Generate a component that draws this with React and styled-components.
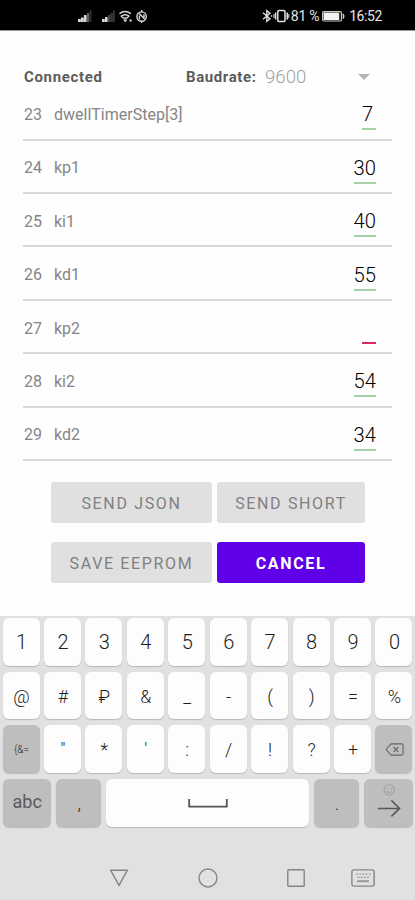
import React, { useState } from 'react'
import styled, { createGlobalStyle } from 'styled-components'

const params = [
  { id: 23, name: 'dwellTimerStep[3]', value: '7' },
  { id: 24, name: 'kp1', value: '30' },
  { id: 25, name: 'ki1', value: '40' },
  { id: 26, name: 'kd1', value: '55' },
  { id: 27, name: 'kp2', value: '' },
  { id: 28, name: 'ki2', value: '54' },
  { id: 29, name: 'kd2', value: '34' },
]

const digitKeys = ['1', '2', '3', '4', '5', '6', '7', '8', '9', '0']
const symbolKeys = ['@', '#', '₽', '&', '_', '-', '(', ')', '=', '%']
const punctKeys = ['"', '*', "'", ':', '/', '!', '?', '+']

function StatusIcons() {
  return (
    <svg width="72" height="16" viewBox="0 0 72 16">
      {/* signal 1 */}
      <g fill="#d8d8d8">
        <rect x="1" y="11" width="2.8" height="3" />
        <rect x="4" y="9.5" width="2.8" height="4.5" />
        <rect x="7" y="7" width="2.6" height="7" />
        <rect x="10" y="5" width="2" height="9" fill="#606060" />
        <rect x="12.4" y="2.5" width="2" height="11.5" fill="#343434" />
      </g>
      {/* signal 2 */}
      <g fill="#d8d8d8">
        <rect x="25" y="11" width="2.8" height="3" />
        <rect x="28" y="9" width="2.6" height="5" />
        <rect x="31" y="7" width="2.4" height="7" fill="#484848" />
        <rect x="33.6" y="5" width="2.2" height="9" fill="#3c3c3c" />
        <rect x="36" y="2.5" width="2" height="11.5" fill="#303030" />
      </g>
      {/* wifi */}
      <g fill="none" stroke="#d8d8d8" strokeWidth="1.5">
        <path d="M42.5 5.6Q48 1.2 53.8 5.6" />
        <path d="M44.4 8.2Q48 5.2 51.8 8.2Q48 12.4 44.4 8.2Z" />
        <path d="M46.8 11.4L48.2 13L49.6 11.4" />
        <path d="M53.6 11.4V13.6" strokeWidth="2" />
      </g>
      {/* shield */}
      <g fill="none" stroke="#d8d8d8" strokeWidth="1.4">
        <circle cx="64.6" cy="8.6" r="4.7" />
        <path d="M62.2 5.4L67 10.2V6.2M62.4 7.5V11.4M64.6 2V4M64.6 13V15" />
      </g>
    </svg>
  )
}

function BluetoothIcon() {
  return (
    <svg width="11" height="14" viewBox="0 0 11 14" fill="none" stroke="#e0e0e0" strokeWidth="1.4">
      <path d="M1 3.7L8 9.8L4.8 12.4V1.6L8 4.2L1 10.3M9.6 6.2V7.8" />
    </svg>
  )
}

function VibrateIcon() {
  return (
    <svg width="17" height="14" viewBox="0 0 17 14" fill="none" stroke="#e0e0e0" strokeWidth="1.5">
      <rect x="4.8" y="1.4" width="7.2" height="11.2" rx="1.2" />
      <path d="M2.6 3.5V10.5M14.2 3.5V10.5" />
      <path d="M1 5V9M15.8 5V9" strokeWidth="1" />
    </svg>
  )
}

function BatteryIcon() {
  return (
    <svg width="23" height="11" viewBox="0 0 23 11">
      <rect x=".6" y=".6" width="18.8" height="9.4" rx="1.2" fill="none" stroke="#c8c8c8" strokeWidth="1.2" />
      <rect x="1.6" y="1.6" width="15.6" height="7.4" fill="#f2f2f2" />
      <path d="M20.8 3Q22.6 5.3 20.8 7.6" fill="none" stroke="#c8c8c8" strokeWidth="1.6" />
    </svg>
  )
}

function BackspaceIcon() {
  return (
    <svg width="19" height="13" viewBox="0 0 19 13" fill="none" stroke="#666" strokeWidth="1.1">
      <path d="M6 .9H16.6Q18.1 .9 18.1 2.4V10.6Q18.1 12.1 16.6 12.1H6L1 6.5Z" strokeLinejoin="round" />
      <path d="M8.6 4.1L13.2 8.9M13.2 4.1L8.6 8.9" strokeWidth="1.3" />
    </svg>
  )
}

function EnterIcon() {
  return (
    <svg width="26" height="38" viewBox="0 0 26 38" fill="none">
      <g stroke="#a2a2a2" strokeWidth="1.1">
        <circle cx="13.2" cy="6" r="5.2" />
        <path d="M10.5 7.2Q13.2 10 15.9 7.2M11.3 4V5.2M15.1 4V5.2" />
      </g>
      <path d="M1.8 24.4H23.2M15.4 16.4L23.6 24.4L15.4 32.4" stroke="#585858" strokeWidth="1.5" />
    </svg>
  )
}

function App() {
  const [list] = useState(params)

  return (
    <>
      <GlobalStyle />
      <Screen>
        <StatusBar>
          <StatusIcons />
          <StatusRight>
            <BluetoothIcon />
            <VibrateIcon />
            <BatteryText>81 %</BatteryText>
            <BatteryIcon />
            <Clock>16:52</Clock>
          </StatusRight>
        </StatusBar>

        <Content>
          <Header>
            <Connection>Connected</Connection>
            <BaudLabel>Baudrate:</BaudLabel>
            <BaudValue>9600</BaudValue>
            <Caret />
          </Header>

          {list.map((item) => (
            <ParamRow key={item.id}>
              <ParamId>{item.id}</ParamId>
              <ParamName>{item.name}</ParamName>
              <ParamValue $empty={!item.value}>{item.value}</ParamValue>
            </ParamRow>
          ))}

          <ButtonGrid>
            <ActionButton>SEND JSON</ActionButton>
            <ActionButton>SEND SHORT</ActionButton>
            <ActionButton>SAVE EEPROM</ActionButton>
            <ActionButton $primary>CANCEL</ActionButton>
          </ButtonGrid>
        </Content>

        <Keyboard>
          <KeyRow>
            {digitKeys.map((k) => <Key key={k} $size={20}>{k}</Key>)}
          </KeyRow>
          <KeyRow>
            {symbolKeys.map((k) => <Key key={k}>{k}</Key>)}
          </KeyRow>
          <KeyRow>
            <Key $dark $size={10}>{'{&='}</Key>
            {punctKeys.map((k) => <Key key={k}>{k}</Key>)}
            <Key $dark><BackspaceIcon /></Key>
          </KeyRow>
          <KeyRow>
            <Key $dark $width={48.5}><KeyLabel>abc</KeyLabel></Key>
            <Key $dark $width={45}>,</Key>
            <Key $width={202.5}>
              <svg width="40" height="12" viewBox="0 0 40 12" fill="none" stroke="#555" strokeWidth="1.8">
                <path d="M1.2 2V9.6H38.8V2" />
              </svg>
            </Key>
            <Key $dark $width={45}>.</Key>
            <Key $dark $width={48.5}><EnterIcon /></Key>
          </KeyRow>
        </Keyboard>

        <NavBar>
          <svg width="20" height="18" viewBox="0 0 20 18" fill="none" stroke="#858585" strokeWidth="1.4">
            <path d="M1.6 1.2H18.4L10 16.4Z" strokeLinejoin="round" />
          </svg>
          <svg width="20" height="20" viewBox="0 0 20 20" fill="none" stroke="#858585" strokeWidth="1.4">
            <circle cx="10" cy="10" r="9" />
          </svg>
          <svg width="18" height="18" viewBox="0 0 18 18" fill="none" stroke="#858585" strokeWidth="1.4">
            <rect x=".8" y=".8" width="16.4" height="16.4" rx=".8" />
          </svg>
          <svg width="24" height="18" viewBox="0 0 24 18" fill="none" stroke="#858585" strokeWidth="1.4">
            <rect x=".9" y=".9" width="22.2" height="16.2" rx="2" />
            <path d="M5 5.2H19.5M6.5 8.4H18" strokeDasharray="2 1.2" strokeWidth="1.2" stroke="#999" />
            <path d="M6 12.2H18" strokeWidth="2" stroke="#999" />
          </svg>
        </NavBar>
      </Screen>
    </>
  )
}

const GlobalStyle = createGlobalStyle`
  * {
    box-sizing: border-box;
  }
  body {
    margin: 0;
    background-color: #fefefe;
    font-family: Roboto, "Noto Sans", sans-serif;
    -webkit-font-smoothing: antialiased;
  }
`

const Screen = styled.div`
  width: 415px;
  height: 900px;
  display: flex;
  flex-direction: column;
  background-color: #fefefe;
  overflow: hidden;
`

const StatusBar = styled.div`
  height: 31px;
  flex-shrink: 0;
  background-color: #000;
  border-bottom: 1px solid #999;
  display: flex;
  justify-content: space-between;
  align-items: center;
  padding: 2px 33px 0 77px;
  color: #e6e6e6;
`

const StatusRight = styled.div`
  display: flex;
  align-items: center;
`

const BatteryText = styled.span`
  font-size: 14px;
  margin: 0 3px 0 1px;
  letter-spacing: -0.3px;
  white-space: nowrap;
`

const Clock = styled.span`
  font-size: 14px;
  margin-left: 4px;
  letter-spacing: -0.4px;
`

const Content = styled.div`
  height: 585px;
  flex-shrink: 0;
  padding: 0 23px;
`

const Header = styled.div`
  height: 56.3px;
  display: flex;
  align-items: center;
  padding: 35px 22px 0 1px;
  font-size: 15px;
`

const Connection = styled.span`
  width: 162px;
  font-weight: 700;
  letter-spacing: 0.65px;
  color: #5c5c5c;
`

const BaudLabel = styled.span`
  width: 79px;
  font-weight: 700;
  letter-spacing: 0.6px;
  color: #5c5c5c;
`

const BaudValue = styled.span`
  flex: 1;
  font-size: 18.6px;
  font-weight: 300;
  color: #a0a0a0;
`

const Caret = styled.span`
  border: 6px solid transparent;
  border-top: 6px solid #b4b4b4;
  border-bottom: 0;
`

const ParamRow = styled.div`
  height: 53.4px;
  display: flex;
  align-items: center;
  border-bottom: 2px solid #d8d8d8;
  padding: 3px 16px 0 1px;
`

const ParamId = styled.span`
  width: 30px;
  font-size: 16px;
  color: #858585;
`

const ParamName = styled.span`
  flex: 1;
  font-size: 16px;
  color: #858585;
`

const ParamValue = styled.span`
  min-width: 14px;
  height: 32px;
  line-height: 32px;
  font-size: 20.2px;
  font-weight: 300;
  text-align: left;
  color: #000;
  border-bottom: 2px solid ${(props) => (props.$empty ? '#d8266c' : '#a6d0a8')};
`

const ButtonGrid = styled.div`
  display: grid;
  grid-template-columns: 161px 148px;
  grid-template-rows: 41px 41px;
  gap: 19px 5px;
  padding: 21px 0 0 28px;
`

const ActionButton = styled.button`
  border: none;
  border-radius: 3px;
  padding: 2px 0 0;
  font-family: inherit;
  font-size: 16px;
  font-weight: ${(props) => (props.$primary ? 700 : 400)};
  letter-spacing: 1.65px;
  color: ${(props) => (props.$primary ? '#fff' : '#808080')};
  background-color: ${(props) => (props.$primary ? '#6000e8' : '#e0e0e0')};
`

const Keyboard = styled.div`
  height: 214px;
  flex-shrink: 0;
  display: flex;
  flex-direction: column;
  gap: 6px;
  padding: 2px 2.5px 0;
  background-color: #e1e1e1;
`

const KeyRow = styled.div`
  display: flex;
  justify-content: space-between;
`

const Key = styled.div`
  width: ${(props) => props.$width || 37}px;
  height: 47.7px;
  display: flex;
  justify-content: center;
  align-items: center;
  padding: 1px 0 0 1px;
  border-radius: 6px;
  font-size: ${(props) => props.$size || 18}px;
  font-weight: 300;
  color: #1e1e1e;
  background-color: ${(props) => (props.$dark ? '#bebebe' : '#fdfdfd')};
  box-shadow: 0 1px 1px #b9b9b9;
`

const KeyLabel = styled.span`
  font-weight: 400;
  color: #5a5a5a;
  padding-bottom: 4px;
`

const NavBar = styled.div`
  flex: 1;
  display: flex;
  align-items: center;
  padding: 25px 0 0 109px;
  background-color: #e1e1e1;
  svg:nth-child(2) {
    margin-left: 69px;
  }
  svg:nth-child(3) {
    margin-left: 69px;
  }
  svg:nth-child(4) {
    margin-left: 46px;
  }
`

export default App
